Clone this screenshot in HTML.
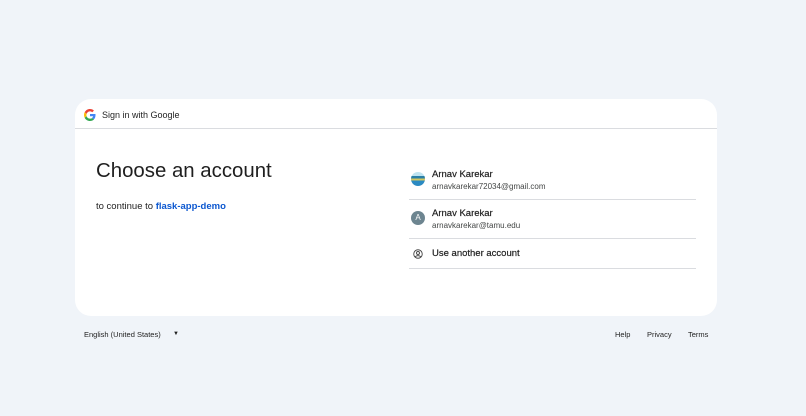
<!DOCTYPE html>
<html><head><meta charset="utf-8"><style>
*{margin:0;padding:0;box-sizing:border-box}
body{width:806px;height:416px;background:#f0f4f9;font-family:"Liberation Sans",Arial,sans-serif;position:relative;overflow:hidden;color:#1f1f1f}
.card{position:absolute;left:75px;top:99px;width:642px;height:217px;background:#fff;border-radius:16px}
.hdr{height:30px;border-bottom:1px solid #dadce0;position:relative}
.hdr svg{position:absolute;left:9px;top:10px}
.hdr span{position:absolute;left:27px;top:11px;font-size:9px;color:#1f1f1f}
h1{position:absolute;left:21px;top:61px;font-size:20.4px;font-weight:400;color:#1f1f1f}
.sub{position:absolute;left:21px;top:101px;font-size:9.5px;top:102px}
.sub b{color:#0b57d0;font-weight:700}
.acc{position:absolute;left:334px;width:287px;border-bottom:1px solid #dadce0}
.name{position:absolute;left:23px;font-size:9.5px;color:#1f1f1f;-webkit-text-stroke:0.2px #1f1f1f}
.em{position:absolute;left:23px;font-size:8px;color:#444746}
.av{position:absolute;left:2px;width:14px;height:14px;border-radius:50%}
.ft{position:absolute;top:330px;font-size:7.5px;color:#1f1f1f}
</style></head><body>
<div class="card">
 <div class="hdr">
  <svg width="12" height="12" viewBox="0 0 48 48"><path fill="#EA4335" d="M24 9.5c3.5 0 6.6 1.2 9 3.5l6.7-6.7C35.6 2.4 30.2 0 24 0 14.6 0 6.6 5.4 2.6 13.2l7.8 6.1C12.3 13.6 17.6 9.5 24 9.5z"/><path fill="#4285F4" d="M46.1 24.5c0-1.600-.1-3.1-.4-4.5H24v9h12.4c-.5 2.9-2.2 5.4-4.7 7l7.6 5.9c4.4-4.1 6.8-10.1 6.8-17.4z"/><path fill="#FBBC05" d="M10.4 28.7c-.5-1.4-.8-3-.8-4.7s.3-3.2.8-4.7l-7.8-6.1C.9 16.5 0 20.1 0 24s.9 7.5 2.6 10.800l7.8-6.1z"/><path fill="#34A853" d="M24 48c6.5 0 11.9-2.1 15.9-5.8l-7.6-5.9c-2.1 1.4-4.9 2.3-8.3 2.3-6.4 0-11.7-4.1-13.6-9.8l-7.8 6.1C6.6 42.6 14.6 48 24 48z"/></svg>
  <span>Sign in with Google</span>
 </div>
 <h1>Choose an account</h1>
 <div class="sub">to continue to <b>flask-app-demo</b></div>
 <div class="acc" style="top:62px;height:39px">
  <div class="av" style="top:11px;background:linear-gradient(#bfe3f0 0 30%,#2a7fa6 30% 45%,#d4c860 45% 60%,#2b8ac2 60%)"></div>
  <div class="name" style="top:8px">Arnav Karekar</div>
  <div class="em" style="top:21px">arnavkarekar72034@gmail.com</div>
 </div>
 <div class="acc" style="top:101px;height:39px">
  <div class="av" style="top:11px;background:#6d8590;color:#fff;font-size:8px;text-align:center;line-height:14px">A</div>
  <div class="name" style="top:8px">Arnav Karekar</div>
  <div class="em" style="top:21px">arnavkarekar@tamu.edu</div>
 </div>
 <div class="acc" style="top:140px;height:30px">
  <svg style="position:absolute;left:4px;top:10px" width="10" height="10" viewBox="0 0 20 20"><circle cx="10" cy="10" r="8.5" fill="none" stroke="#444" stroke-width="1.8"/><circle cx="10" cy="8" r="3" fill="none" stroke="#444" stroke-width="1.8"/><path d="M4.5 15.5c3-3 8-3 11 0" fill="none" stroke="#444" stroke-width="1.8"/></svg>
  <div class="name" style="top:9px">Use another account</div>
 </div>
</div>
<div class="ft" style="left:84px">English (United States)</div>
<div class="ft" style="left:173px;font-size:6px;top:331px">▼</div>
<div class="ft" style="left:615px">Help</div>
<div class="ft" style="left:647px">Privacy</div>
<div class="ft" style="left:688px">Terms</div>
</body></html>
